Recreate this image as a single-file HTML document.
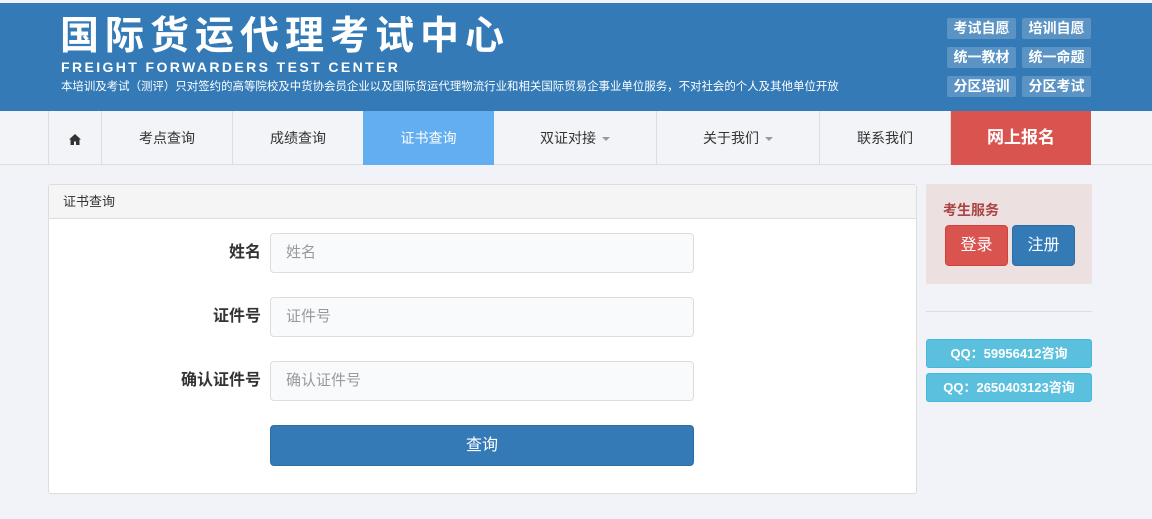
<!DOCTYPE html>
<html><head><meta charset="utf-8"><style>
*{box-sizing:border-box;margin:0;padding:0}
body{width:1152px;height:519px;background:#f2f3f8;font-family:"Liberation Sans","Noto Sans CJK SC",sans-serif;position:relative;overflow:hidden}
.hd{position:absolute;left:0;top:3px;width:1152px;height:108px;background:#337ab7;color:#fff}
.t1{position:absolute;left:60px;top:11px;font-size:39px;font-weight:bold;letter-spacing:6px;line-height:46px}
.t2{position:absolute;left:61px;top:56px;font-size:14px;font-weight:bold;letter-spacing:2.4px}
.t3{position:absolute;left:61px;top:75px;font-size:11.45px}
.tg{position:absolute;width:69px;height:21px;background:#5b93c5;border-radius:2px;font-size:14px;font-weight:bold;text-align:center;line-height:21px}
.nav{position:absolute;left:0;top:111px;width:1152px;height:54px;background:#f3f4f8;border-bottom:1px solid #ddd}
.ni{position:absolute;top:0;height:54px;border-left:1px solid #ddd;text-align:center;line-height:54px;font-size:14px;color:#333}
.car{display:inline-block;border-left:4px solid transparent;border-right:4px solid transparent;border-top:4px solid #999;vertical-align:middle;margin-left:6px}
.pn{position:absolute;left:48px;top:184px;width:869px;height:310px;background:#fff;border:1px solid #ddd;border-radius:3px}
.ph{height:34px;background:#f5f5f5;border-bottom:1px solid #ddd;font-size:13px;line-height:33px;padding-left:14px;color:#333}
.lb{position:absolute;right:655px;font-size:16px;font-weight:bold;color:#333;line-height:40px}
.in{position:absolute;left:221px;width:424px;height:40px;border:1px solid #ddd;border-radius:4px;background:#f9fafc;font-size:15px;color:#999;line-height:38px;padding-left:15px}
.btn{position:absolute;left:221px;top:240px;width:424px;height:41px;background:#337ab7;border:1px solid #2e6da4;border-radius:4px;color:#fff;font-size:16px;text-align:center;line-height:39px}
.sb{position:absolute;left:926px;top:184px;width:166px;height:100px;background:#ede0e0;border-radius:2px}
.qq{position:absolute;left:926px;width:166px;height:29px;background:#5bc0de;border:1px solid #46b8da;border-radius:3px;color:#fff;font-size:13px;font-weight:bold;text-align:center;line-height:27px}
</style></head><body>
<div class="hd">
<div class="t1">国际货运代理考试中心</div>
<div class="t2">FREIGHT FORWARDERS TEST CENTER</div>
<div class="t3">本培训及考试（测评）只对签约的高等院校及中货协会员企业以及国际货运代理物流行业和相关国际贸易企事业单位服务，不对社会的个人及其他单位开放</div>
<div class="tg" style="left:947px;top:15px">考试自愿</div><div class="tg" style="left:1022px;top:15px">培训自愿</div>
<div class="tg" style="left:947px;top:44px">统一教材</div><div class="tg" style="left:1022px;top:44px">统一命题</div>
<div class="tg" style="left:947px;top:73px">分区培训</div><div class="tg" style="left:1022px;top:73px">分区考试</div>
</div>
<div class="nav">
<div class="ni" style="left:48px;width:53px"><svg width="12" height="11" viewBox="0 0 12 11" style="vertical-align:middle"><path d="M6 0L0 5.5h1.5V11h3.5V7.5h2V11h3.5V5.5H12z" fill="#333"/></svg></div>
<div class="ni" style="left:101px;width:131px">考点查询</div>
<div class="ni" style="left:232px;width:131px">成绩查询</div>
<div class="ni" style="left:363px;width:131px;background:#62aef0;color:#fff;border-left:none">证书查询</div>
<div class="ni" style="left:494px;width:162px;border-left:none">双证对接<span class="car"></span></div>
<div class="ni" style="left:656px;width:163px">关于我们<span class="car"></span></div>
<div class="ni" style="left:819px;width:131px">联系我们</div>
<div class="ni" style="left:950px;width:141px;background:#d9534f;color:#fff;font-size:17px;font-weight:bold">网上报名</div>
</div>
<div class="pn">
<div class="ph">证书查询</div>
<div class="lb" style="top:48px">姓名</div><div class="in" style="top:48px">姓名</div>
<div class="lb" style="top:112px">证件号</div><div class="in" style="top:112px">证件号</div>
<div class="lb" style="top:176px">确认证件号</div><div class="in" style="top:176px">确认证件号</div>
<div class="btn">查询</div>
</div>
<div class="sb">
<div style="position:absolute;left:17px;top:16px;font-size:14px;font-weight:bold;color:#a94442">考生服务</div>
<div style="position:absolute;left:19px;top:41px;width:63px;height:41px;background:#d9534f;border:1px solid #d43f3a;border-radius:4px;color:#fff;font-size:16px;text-align:center;line-height:39px">登录</div>
<div style="position:absolute;left:86px;top:41px;width:63px;height:41px;background:#337ab7;border:1px solid #2e6da4;border-radius:4px;color:#fff;font-size:16px;text-align:center;line-height:39px">注册</div>
</div>
<div style="position:absolute;left:926px;top:311px;width:166px;height:1px;background:#ddd"></div>
<div class="qq" style="top:339px">QQ：59956412咨询</div>
<div class="qq" style="top:373px">QQ：2650403123咨询</div>
</body></html>
